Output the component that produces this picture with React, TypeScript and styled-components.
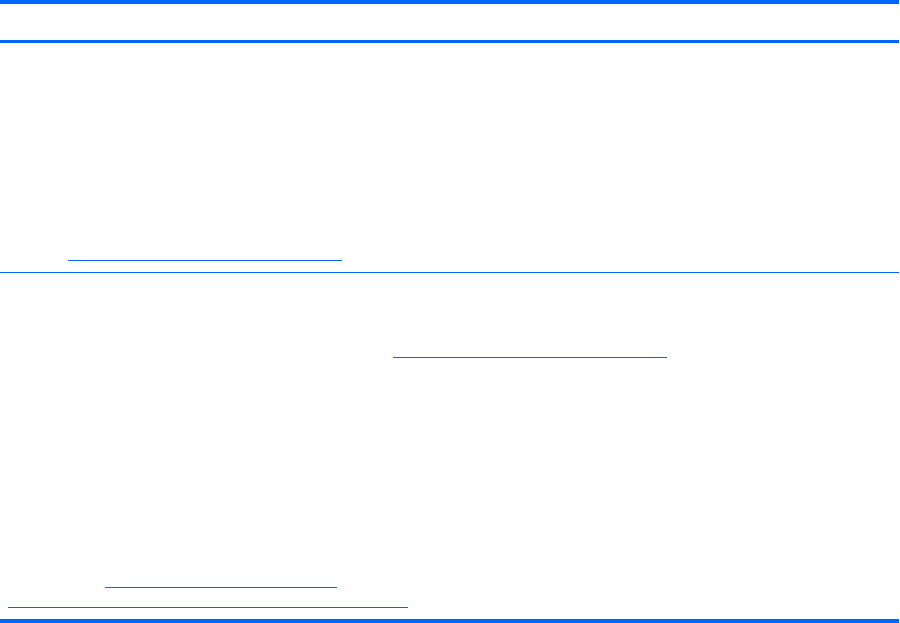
import React from 'react'
import styled, { createGlobalStyle } from 'styled-components'

const GlobalStyle = createGlobalStyle`
  html, body {
    margin: 0;
    padding: 0;
    background: #ffffff;
    font-family: "Liberation Sans", Arial, sans-serif;
  }
`

const Page = styled.div`
  width: 900px;
  height: 623px;
  overflow: hidden;
  background: #ffffff;
`

const Table = styled.div`
  width: 899px;
  display: flex;
  flex-direction: column;
  border-top: 4px solid #0066ff;
  border-bottom: 4px solid #0066ff;
`

const HeaderRow = styled.div`
  height: 36px;
  border-bottom: 3px solid #0066ff;
`

const Row = styled.div<{ $height: number; $divider?: boolean }>`
  height: ${({ $height }) => $height}px;
  display: flex;
  flex-direction: column;
  align-items: flex-start;
  border-bottom: ${({ $divider }) => ($divider ? '1px solid #0066ff' : 'none')};
`

// underlined link with no visible label (text not rendered in source)
const LinkLine = styled.a<{ $left: number; $top: number; $width: number }>`
  display: block;
  margin-left: ${({ $left }) => $left}px;
  margin-top: ${({ $top }) => $top}px;
  width: ${({ $width }) => $width}px;
  height: 0;
  border-bottom: 1px solid #0a63f0;
`

export default function App() {
  return (
    <Page>
      <GlobalStyle />
      <Table>
        <HeaderRow />
        <Row $height={229} $divider>
          <LinkLine $left={68} $top={217} $width={274} />
        </Row>
        <Row $height={346}>
          <LinkLine $left={393} $top={84} $width={274} />
          <LinkLine $left={105} $top={229} $width={232} />
          <LinkLine $left={8} $top={19} $width={400} />
        </Row>
      </Table>
    </Page>
  )
}
